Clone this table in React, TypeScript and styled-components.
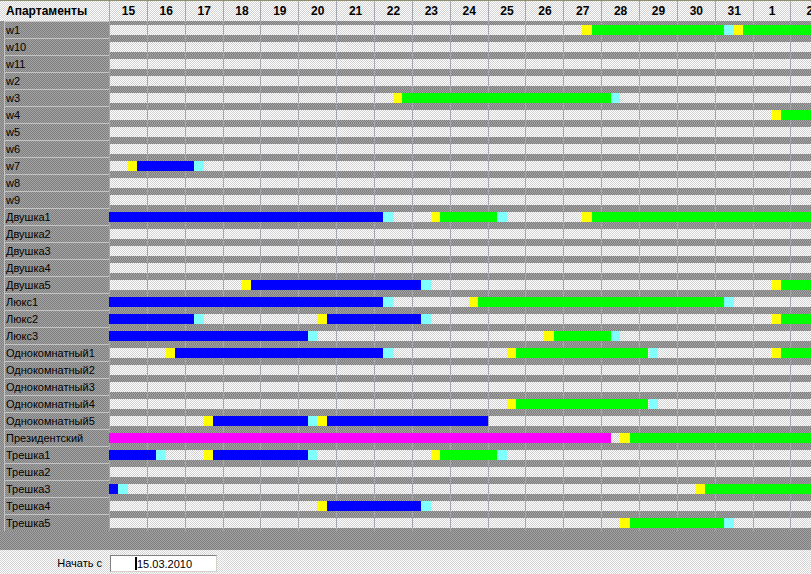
import React from 'react';
import styled, { createGlobalStyle, css } from 'styled-components';

const COL = 37.86;
const LABEL_W = 109;
const DAYS = [15, 16, 17, 18, 19, 20, 21, 22, 23, 24, 25, 26, 27, 28, 29, 30, 31, 1, 2];

const colors = {
  blue: '#0000ff',
  green: '#00ff00',
  magenta: '#ff00ff',
  checkIn: '#ffff00',
  checkOut: '#80ffff',
  line: '#a2a8ae',
  sep: '#c4c4c4',
};

const checker = (a: string, b: string) => css`
  background-color: ${a};
  background-image: repeating-conic-gradient(${a} 0 25%, ${b} 0 50%);
  background-size: 2px 2px;
`;

const light = checker('#ffffff', '#d2d2d2');
const dark = checker('#808080', '#a2a2a2');

const GlobalStyle = createGlobalStyle`
  html, body {
    margin: 0;
    padding: 0;
    background: #808080;
  }
  body {
    font-family: "Liberation Sans", Arial, sans-serif;
    color: #000;
  }
`;

const Page = styled.div`
  width: 811px;
  height: 574px;
  overflow: hidden;
  display: flex;
  flex-direction: column;
`;

const HeaderRow = styled.div`
  display: grid;
  grid-template-columns: ${LABEL_W}px repeat(${DAYS.length}, ${COL}px);
  height: 21px;
  box-sizing: border-box;
  border-top: 1px solid #8e8e70;
  ${light};
`;

const HeaderTitle = styled.div`
  font-size: 12px;
  font-weight: bold;
  line-height: 20px;
  padding-left: 6px;
  white-space: nowrap;
`;

const HeaderDay = styled.div`
  border-left: 1px solid ${colors.line};
  font-size: 12px;
  font-weight: bold;
  line-height: 20px;
  text-align: center;
`;

const Row = styled.div`
  display: grid;
  grid-template-columns: ${LABEL_W}px 1fr;
  height: 17px;
`;

const LabelArea = styled.div`
  padding-left: 4px;
  ${dark};
`;

const Label = styled.div`
  height: 100%;
  box-sizing: border-box;
  border-left: 1px solid ${colors.sep};
  border-top: 1px solid ${colors.sep};
  padding-left: 1px;
  font-size: 11px;
  line-height: 16px;
  white-space: nowrap;
  overflow: hidden;
`;

const Track = styled.div`
  position: relative;
  display: flex;
  overflow: hidden;
`;

const DayCell = styled.div`
  flex: 0 0 ${COL}px;
  box-sizing: border-box;
  border-left: 1px solid ${colors.line};
  padding-top: 4px;
  ${dark};
`;

const Band = styled.div`
  height: 10px;
  ${light};
`;

const Bar = styled.div<{ $color: string }>`
  position: absolute;
  top: 4px;
  height: 10px;
  background: ${({ $color }) => $color};
`;

const Filler = styled.div`
  height: 19px;
  ${dark};
`;

const BottomPanel = styled.div`
  flex: 1;
  display: flex;
  align-items: flex-start;
  padding-top: 5px;
  ${light};
`;

const StartLabel = styled.div`
  width: 102px;
  text-align: right;
  font-size: 11px;
  line-height: 17px;
`;

const DateBox = styled.div`
  margin-left: 8px;
  width: 107px;
  height: 17px;
  box-sizing: border-box;
  background: #fff;
  border: 1px solid;
  border-color: #808080 #d4d0c8 #d4d0c8 #808080;
  display: flex;
  align-items: center;
  justify-content: center;
  font-size: 11px;
`;

const Caret = styled.span`
  width: 2px;
  height: 13px;
  background: #000;
`;

type Booking = { a?: number; b?: number; color: string; noOut?: boolean };

const G = colors.green;
const B = colors.blue;

const rows: { name: string; bookings: Booking[] }[] = [
  { name: 'w1', bookings: [{ a: 12, b: 16, color: G }, { a: 16, color: G }] },
  { name: 'w10', bookings: [] },
  { name: 'w11', bookings: [] },
  { name: 'w2', bookings: [] },
  { name: 'w3', bookings: [{ a: 7, b: 13, color: G }] },
  { name: 'w4', bookings: [{ a: 17, color: G }] },
  { name: 'w5', bookings: [] },
  { name: 'w6', bookings: [] },
  { name: 'w7', bookings: [{ a: 0, b: 2, color: B }] },
  { name: 'w8', bookings: [] },
  { name: 'w9', bookings: [] },
  { name: 'Двушка1', bookings: [{ b: 7, color: B }, { a: 8, b: 10, color: G }, { a: 12, color: G }] },
  { name: 'Двушка2', bookings: [] },
  { name: 'Двушка3', bookings: [] },
  { name: 'Двушка4', bookings: [] },
  { name: 'Двушка5', bookings: [{ a: 3, b: 8, color: B }, { a: 17, color: G }] },
  { name: 'Люкс1', bookings: [{ b: 7, color: B }, { a: 9, b: 16, color: G }] },
  { name: 'Люкс2', bookings: [{ b: 2, color: B }, { a: 5, b: 8, color: B }, { a: 17, color: G }] },
  { name: 'Люкс3', bookings: [{ b: 5, color: B }, { a: 11, b: 13, color: G }] },
  { name: 'Однокомнатный1', bookings: [{ a: 1, b: 7, color: B }, { a: 10, b: 14, color: G }, { a: 17, color: G }] },
  { name: 'Однокомнатный2', bookings: [] },
  { name: 'Однокомнатный3', bookings: [] },
  { name: 'Однокомнатный4', bookings: [{ a: 10, b: 14, color: G }] },
  { name: 'Однокомнатный5', bookings: [{ a: 2, b: 5, color: B }, { a: 5, b: 9.75, color: B, noOut: true }] },
  { name: 'Президентский', bookings: [{ b: 13, color: colors.magenta, noOut: true }, { a: 13, color: G }] },
  { name: 'Трешка1', bookings: [{ b: 1, color: B }, { a: 2, b: 5, color: B }, { a: 8, b: 10, color: G }] },
  { name: 'Трешка2', bookings: [] },
  { name: 'Трешка3', bookings: [{ b: 0, color: B }, { a: 15, color: G }] },
  { name: 'Трешка4', bookings: [{ a: 5, b: 8, color: B }] },
  { name: 'Трешка5', bookings: [{ a: 13, b: 16, color: G }] },
];

// positions are in days from the first visible column
const span = (from: number, to: number) => ({ left: from * COL, width: (to - from) * COL });

function BookingBars({ booking }: { booking: Booking }) {
  const { a, b, color, noOut } = booking;
  const start = a === undefined ? 0 : a + 0.75;
  const end = b === undefined ? DAYS.length : b + 0.25;
  return (
    <>
      {a !== undefined && <Bar $color={colors.checkIn} style={span(a + 0.5, a + 0.75)} />}
      <Bar $color={color} style={span(start, end)} />
      {b !== undefined && !noOut && <Bar $color={colors.checkOut} style={span(b + 0.25, b + 0.5)} />}
    </>
  );
}

export default function App() {
  return (
    <Page>
      <GlobalStyle />
      <HeaderRow>
        <HeaderTitle>Апартаменты</HeaderTitle>
        {DAYS.map((d) => (
          <HeaderDay key={d}>{d}</HeaderDay>
        ))}
      </HeaderRow>
      {rows.map((row) => (
        <Row key={row.name}>
          <LabelArea>
            <Label>{row.name}</Label>
          </LabelArea>
          <Track>
            {DAYS.map((d) => (
              <DayCell key={d}>
                <Band />
              </DayCell>
            ))}
            {row.bookings.map((bk, i) => (
              <BookingBars key={i} booking={bk} />
            ))}
          </Track>
        </Row>
      ))}
      <Filler />
      <BottomPanel>
        <StartLabel>Начать с</StartLabel>
        <DateBox>
          <Caret />
          15.03.2010
        </DateBox>
      </BottomPanel>
    </Page>
  );
}
